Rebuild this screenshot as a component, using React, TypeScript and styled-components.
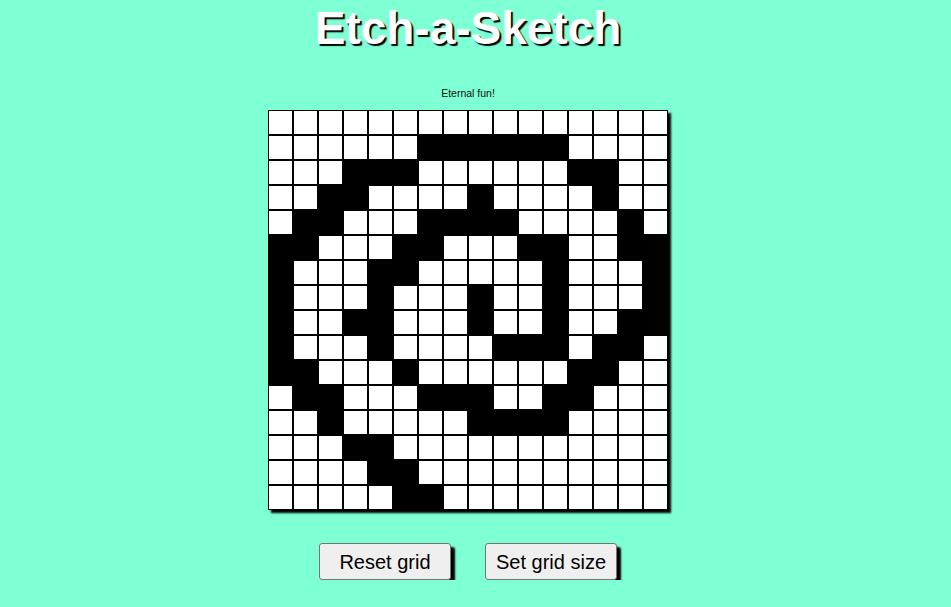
import React from 'react'
import styled, { createGlobalStyle } from 'styled-components'

const GlobalStyle = createGlobalStyle`
  html, body {
    margin: 0;
    padding: 0;
    background: #7fffd4;
    font-family: "Liberation Sans", Arial, sans-serif;
  }
`

// 16x16 drawing, 1 = black cell
const PATTERN = [
  '0000000000000000',
  '0000001111110000',
  '0001110000001100',
  '0011000010000100',
  '0110001111000010',
  '1100011000110011',
  '1000110000010001',
  '1000100010010001',
  '1001100010010011',
  '1000100001110110',
  '1100010000001100',
  '0110001110011000',
  '0010000011110000',
  '0001100000000000',
  '0000110000000000',
  '0000011000000000',
]

const Page = styled.main`
  width: 936px;
  display: flex;
  flex-direction: column;
  align-items: center;
`

const Title = styled.h1`
  margin: 0;
  font-size: 46px;
  line-height: 57px;
  font-weight: 700;
  color: #fff;
  text-shadow: 2px 2px 1px #000;
`

const Tagline = styled.p`
  margin: 30px 0 0;
  font-size: 10.5px;
  line-height: 12px;
  color: #111;
`

const Board = styled.div`
  margin-top: 11px;
  display: grid;
  grid-template-columns: repeat(16, 25px);
  grid-auto-rows: 25px;
  box-shadow: 3px 3px 2px #000;
`

const Cell = styled.div<{ $on: boolean }>`
  box-sizing: border-box;
  border: 1px solid #000;
  background: ${p => (p.$on ? '#000' : '#fff')};
`

const Controls = styled.div`
  margin-top: 33px;
  display: flex;
  gap: 34px;
`

const Button = styled.button`
  box-sizing: border-box;
  width: 132px;
  height: 37px;
  padding: 1px 0 0;
  font-family: "Liberation Sans", Arial, sans-serif;
  font-size: 20px;
  color: #000;
  background: #efefef;
  border: 1px solid #767676;
  border-radius: 3px;
  box-shadow: 4px 4px 2px #000;
  cursor: pointer;
`

export default function App() {
  return (
    <>
      <GlobalStyle />
      <Page>
        <Title>Etch-a-Sketch</Title>
        <Tagline>Eternal fun!</Tagline>
        <Board>
          {PATTERN.flatMap((row, r) =>
            row.split('').map((c, i) => <Cell key={`${r}-${i}`} $on={c === '1'} />)
          )}
        </Board>
        <Controls>
          <Button>Reset grid</Button>
          <Button>Set grid size</Button>
        </Controls>
      </Page>
    </>
  )
}
